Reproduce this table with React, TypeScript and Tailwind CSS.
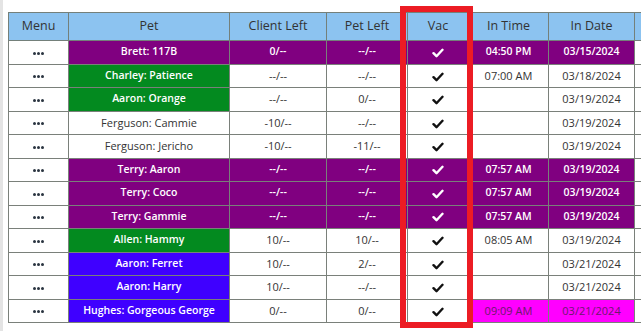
import React from 'react';

type Row = {
  pet: string;
  client: string;
  petLeft: string;
  time: string;
  date: string;
  tone: 'purple' | 'green' | 'blue' | 'plain';
  late?: boolean;
};

const ROWS: Row[] = [
  { pet: 'Brett: 117B', client: '0/--', petLeft: '--/--', time: '04:50 PM', date: '03/15/2024', tone: 'purple' },
  { pet: 'Charley: Patience', client: '--/--', petLeft: '--/--', time: '07:00 AM', date: '03/18/2024', tone: 'green' },
  { pet: 'Aaron: Orange', client: '--/--', petLeft: '0/--', time: '', date: '03/19/2024', tone: 'green' },
  { pet: 'Ferguson: Cammie', client: '-10/--', petLeft: '--/--', time: '', date: '03/19/2024', tone: 'plain' },
  { pet: 'Ferguson: Jericho', client: '-10/--', petLeft: '-11/--', time: '', date: '03/19/2024', tone: 'plain' },
  { pet: 'Terry: Aaron', client: '--/--', petLeft: '--/--', time: '07:57 AM', date: '03/19/2024', tone: 'purple' },
  { pet: 'Terry: Coco', client: '--/--', petLeft: '--/--', time: '07:57 AM', date: '03/19/2024', tone: 'purple' },
  { pet: 'Terry: Gammie', client: '--/--', petLeft: '--/--', time: '07:57 AM', date: '03/19/2024', tone: 'purple' },
  { pet: 'Allen: Hammy', client: '10/--', petLeft: '10/--', time: '08:05 AM', date: '03/19/2024', tone: 'green' },
  { pet: 'Aaron: Ferret', client: '10/--', petLeft: '2/--', time: '', date: '03/21/2024', tone: 'blue' },
  { pet: 'Aaron: Harry', client: '10/--', petLeft: '--/--', time: '', date: '03/21/2024', tone: 'blue' },
  { pet: 'Hughes: Gorgeous George', client: '0/--', petLeft: '0/--', time: '09:09 AM', date: '03/21/2024', tone: 'blue', late: true },
];

const PET_BG = {
  purple: 'bg-[#800080] text-white font-semibold text-[10.5px]',
  green: 'bg-[#038a1f] text-white font-semibold text-[10.5px]',
  blue: 'bg-[#3f00ff] text-white font-semibold text-[10.5px]',
  plain: 'bg-white text-[#333]',
};

const cell = 'border border-[#7a807a] text-center p-0 h-[23.5px] whitespace-nowrap overflow-hidden';

function Check({ white }: { white?: boolean }) {
  return (
    <svg width="12" height="10" viewBox="0 0 12 10" className="inline-block">
      <path d="M1.5 5.2 L4.5 8.2 L10.5 1.8" fill="none" stroke={white ? '#fff' : '#111'} strokeWidth="2.4" strokeLinecap="round" strokeLinejoin="round" />
    </svg>
  );
}

function Dots() {
  return (
    <span className="inline-flex gap-[1px] align-middle">
      <span className="h-[3px] w-[3px] rounded-full bg-[#2a3440]" />
      <span className="h-[3px] w-[3px] rounded-full bg-[#2a3440]" />
      <span className="h-[3px] w-[3px] rounded-full bg-[#2a3440]" />
    </span>
  );
}

export default function App() {
  return (
    <div className="flex h-[331px] w-[641px] overflow-hidden bg-white" style={{ fontFamily: '"Open Sans", "Noto Sans", sans-serif' }}>
      <div className="w-[3px] shrink-0 bg-[#e4e4e4]" />
      <div className="relative flex-1 overflow-hidden pl-[5px] pt-[12px]">
        <table className="table-fixed border-collapse text-[11px] text-[#333]" style={{ width: 666 }}>
          <colgroup>
            <col className="w-[60px]" />
            <col className="w-[161px]" />
            <col className="w-[97px]" />
            <col className="w-[81px]" />
            <col className="w-[61px]" />
            <col className="w-[80px]" />
            <col className="w-[86px]" />
            <col className="w-[40px]" />
          </colgroup>
          <thead>
            <tr className="bg-[#8cc3f0] text-[12.5px] text-[#333]">
              {['Menu', 'Pet', 'Client Left', 'Pet Left', 'Vac', 'In Time', 'In Date', ''].map((h, i) => (
                <th key={i} className="h-[28px] border border-[#74807a] p-0 font-normal">{h}</th>
              ))}
            </tr>
          </thead>
          <tbody className="border-b border-b-black">
            {ROWS.map((r, i) => {
              const purple = r.tone === 'purple';
              const rest = purple ? 'bg-[#800080] text-white font-semibold text-[10.5px]' : 'bg-white text-[#333]';
              const lateCls = r.late ? 'bg-[#ff00ff] text-[#6a1a6a]' : rest;
              return (
                <tr key={i}>
                  <td className={`${cell} bg-white`}><Dots /></td>
                  <td className={`${cell} ${PET_BG[r.tone]}`}>{r.pet}</td>
                  <td className={`${cell} ${rest}`}>{r.client}</td>
                  <td className={`${cell} ${rest}`}>{r.petLeft}</td>
                  <td className={`${cell} ${rest}`}><Check white={purple} /></td>
                  <td className={`${cell} ${lateCls}`}>{r.time}</td>
                  <td className={`${cell} ${lateCls}`}>{r.date}</td>
                  <td className={`${cell} bg-white`} />
                </tr>
              );
            })}
          </tbody>
        </table>
        {/* highlight around the Vac column */}
        <div className="pointer-events-none absolute left-[397px] top-[6px] h-[322px] w-[73px] border-[6px] border-[#ec1c24]" />
      </div>
    </div>
  );
}
